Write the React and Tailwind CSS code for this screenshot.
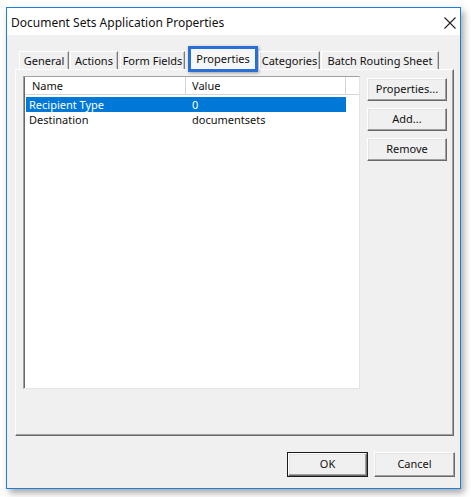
import React from "react";

const font = { fontFamily: '"Noto Sans", "Liberation Sans", Arial, sans-serif' };

function Tab({ label, w, ml }) {
  return (
    <div
      className={`h-[18px] ${w} ${ml} flex items-start justify-center pt-[1px] border-t border-l border-white border-r border-r-[#7a7a7a] shadow-[inset_-1px_0_0_#c8c8c8] text-[11px] leading-[15px] text-[#111] whitespace-nowrap`}
    >
      {label}
    </div>
  );
}

function Btn({ children, className = "" }) {
  return (
    <div
      className={`w-[80px] h-[23px] flex items-center justify-center bg-[#f0f0f0] border-t border-l border-white border-r border-b border-r-[#696969] border-b-[#696969] shadow-[inset_-1px_-1px_0_#a0a0a0,inset_1px_1px_0_#e3e3e3] text-[11px] text-[#111] whitespace-nowrap ${className}`}
    >
      {children}
    </div>
  );
}

export default function App() {
  return (
    <div className="w-[471px] h-[497px] bg-white pl-[6px] pt-[7px]" style={font}>
      <div className="w-[455px] h-[482px] border border-[#1c7fdc] bg-[#f0f0f0] flex flex-col shadow-[3px_4px_7px_rgba(0,0,0,0.35)]">
        {/* title bar */}
        <div className="h-[27px] bg-white flex items-center justify-between pl-[4px] pr-[3px]">
          <span className="text-[12px] text-[#111] leading-none mt-[2px] whitespace-nowrap">Document Sets Application Properties</span>
          <svg width="12" height="12" viewBox="0 0 12 12" className="mr-[1px] mt-[2px]">
            <path d="M0.5 0.5 L11.5 11.5 M11.5 0.5 L0.5 11.5" stroke="#222" strokeWidth="1.1" fill="none" />
          </svg>
        </div>

        {/* tabs row */}
        <div className="mt-[10px] h-[24px] flex items-end pl-[12px] relative z-10">
          <Tab label="General" w="w-[50px]" ml="ml-0" />
          <Tab label="Actions" w="w-[48px]" ml="ml-[1px]" />
          <Tab label="Form Fields" w="w-[65px]" ml="ml-[2px]" />
          <div className="w-[70px] h-[26px] ml-[3px] -mb-[3px] border-[3px] border-[#2a6fd3] bg-[#f7f7f7] shadow-[1px_1px_3px_rgba(0,0,0,0.35)] flex items-start justify-center pt-[2px] text-[11px] leading-[15px] text-[#111] whitespace-nowrap">
            Properties
          </div>
          <Tab label="Categories" w="w-[61px]" ml="ml-[1px]" />
          <Tab label="Batch Routing Sheet" w="w-[118px]" ml="ml-[1px]" />
        </div>

        {/* tab panel */}
        <div className="ml-[8px] w-[439px] h-[367px] border-t border-l border-white border-r border-b border-r-[#696969] border-b-[#696969] shadow-[inset_-1px_-1px_0_#a0a0a0] flex pl-[7px] pt-[6px] gap-[7px]">
          {/* list view */}
          <div className="w-[337px] h-[313px] bg-white border-t border-l border-[#a0a0a0] border-r border-b border-r-[#e3e3e3] border-b-[#e3e3e3] shadow-[inset_1px_1px_0_#696969] pl-[1px]">
            <div className="flex h-[18px] text-[11px] text-[#111] leading-none">
              <div className="w-[161px] h-full flex items-center pl-[7px] border-r border-b border-[#d5d5d5] bg-white">Name</div>
              <div className="w-[160px] h-full flex items-center pl-[6px] border-r border-b border-[#d5d5d5] bg-white">Value</div>
              <div className="flex-1 h-full border-b border-[#d5d5d5] bg-white" />
            </div>
            <div className="mt-[2px] text-[11px] leading-[15px]">
              <div className="flex h-[15px] ml-[1px] w-[320px] bg-[#0078d7] text-white">
                <div className="w-[165px] pl-[3px] whitespace-nowrap">Recipient Type</div>
                <div className="pl-[1px]">0</div>
              </div>
              <div className="flex h-[15px] ml-[1px] text-[#111]">
                <div className="w-[165px] pl-[3px] whitespace-nowrap">Destination</div>
                <div className="pl-[1px]">documentsets</div>
              </div>
            </div>
          </div>
          {/* side buttons */}
          <div className="flex flex-col gap-[7px] pt-[2px]">
            <Btn>Properties...</Btn>
            <Btn>Add...</Btn>
            <Btn>Remove</Btn>
          </div>
        </div>

        {/* footer */}
        <div className="mt-[16px] flex justify-end gap-[6px] pr-[5px]">
          <div className="w-[81px] h-[25px] border border-[#1a1a1a] flex">
            <Btn className="w-[79px] h-[23px]">OK</Btn>
          </div>
          <Btn className="w-[81px] h-[25px]">Cancel</Btn>
        </div>
      </div>
    </div>
  );
}
